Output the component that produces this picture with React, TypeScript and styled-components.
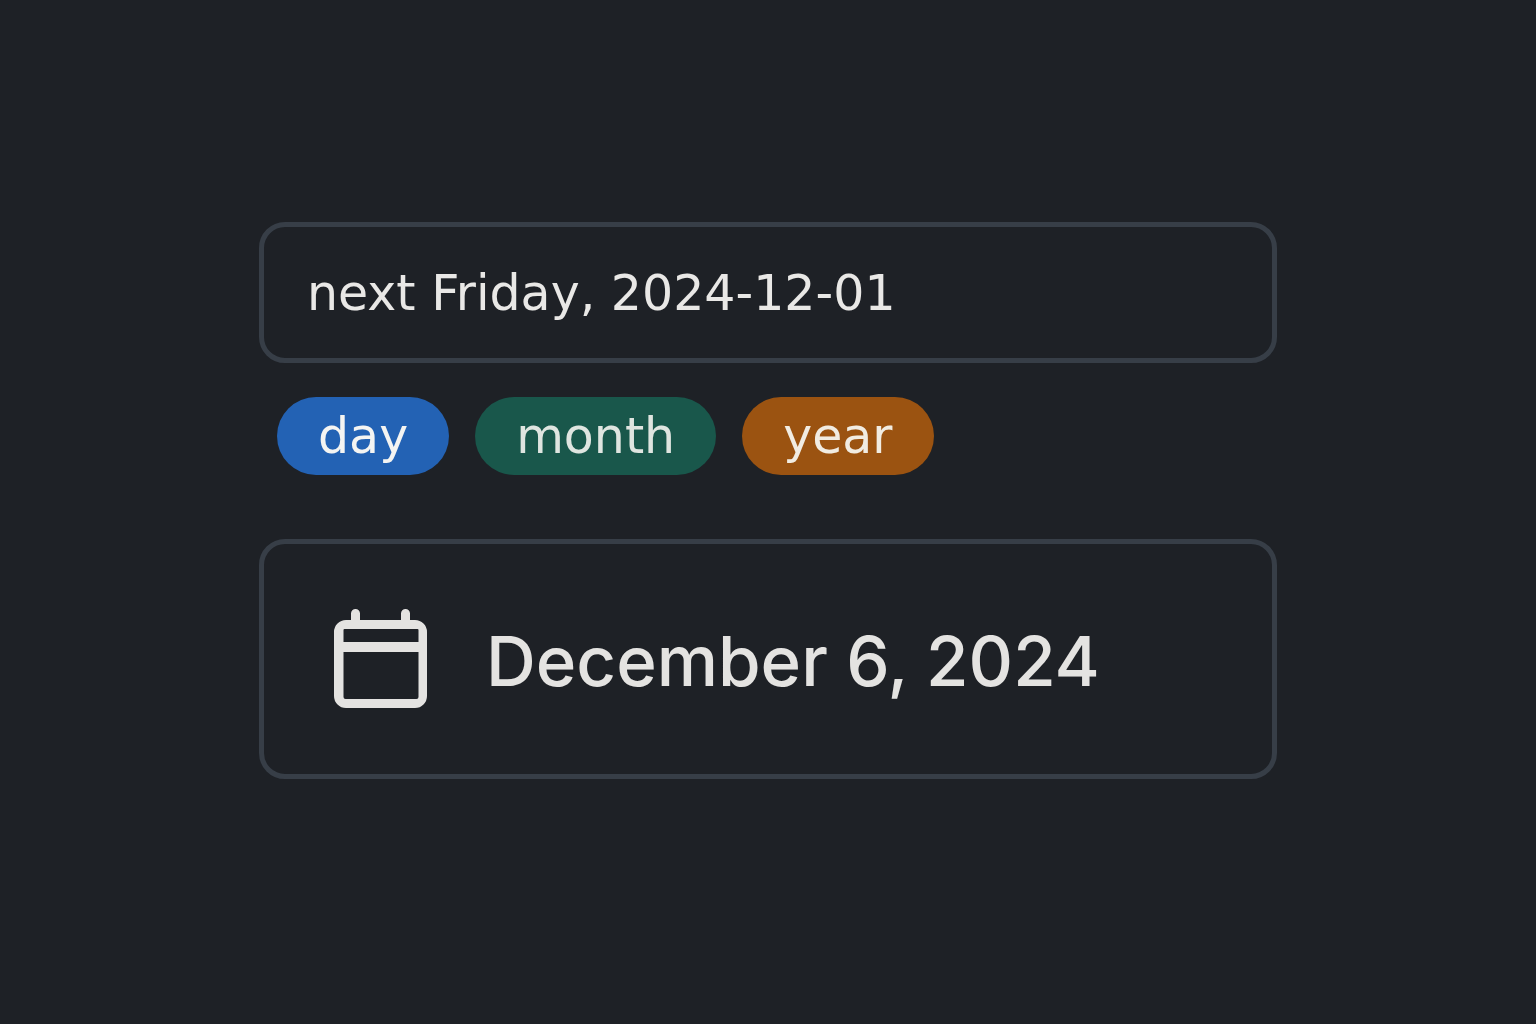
import React, { useState } from 'react';
import styled, { createGlobalStyle } from 'styled-components';

const GlobalStyle = createGlobalStyle`
  *, *::before, *::after {
    box-sizing: border-box;
  }

  body {
    margin: 0;
    background: #1e2126;
    color: #e4e3e1;
    font-family: Inter, "Liberation Sans", sans-serif;
  }
`;

const Page = styled.main`
  display: flex;
  flex-direction: column;
  align-items: center;
  justify-content: center;
  min-height: 100vh;
  padding: 24px 24px 47px;
`;

const Picker = styled.form`
  display: flex;
  flex-direction: column;
  width: 100%;
  max-width: 1018px;
`;

const DateInput = styled.input`
  width: 100%;
  padding: 37px 43px 34px;
  border: 5px solid #373e47;
  border-radius: 26px;
  outline: none;
  background: transparent;
  color: #e9e8e6;
  font-family: "DejaVu Sans", sans-serif;
  font-size: 49px;
  line-height: 60px;
`;

const UnitList = styled.div`
  display: flex;
  flex-wrap: wrap;
  gap: 26px;
  margin: 34px 18px 64px;
`;

const tones = {
  day: { background: '#2362b4', color: '#f4f4f2' },
  month: { background: '#19574b', color: '#dfe5e0' },
  year: { background: '#9b5311', color: '#f1ece2' },
};

type Unit = keyof typeof tones;

const UnitButton = styled.button<{ $unit: Unit }>`
  padding: 10px 41px 8px;
  border: 0;
  border-radius: 39px;
  background: ${({ $unit }) => tones[$unit].background};
  color: ${({ $unit }) => tones[$unit].color};
  font-family: "DejaVu Sans", sans-serif;
  font-size: 49px;
  line-height: 60px;
  cursor: pointer;
`;

const Result = styled.section`
  display: flex;
  align-items: center;
  gap: 58px;
  padding: 65px 70px;
  border: 5px solid #373e47;
  border-radius: 26px;
`;

const CalendarGlyph = styled.svg`
  flex: none;
  width: 94px;
  height: 100px;
`;

const ResultDate = styled.output`
  padding-top: 4px;
  font-size: 69px;
  font-weight: 500;
  line-height: 96px;
`;

function CalendarIcon() {
  return (
    <CalendarGlyph viewBox="0 0 94 100" fill="none" stroke="#e4e3e1" strokeWidth="9" aria-hidden="true">
      <path d="M21.5 14V4.5M71.5 14V4.5" strokeLinecap="round" />
      <path
        fill="#e4e3e1"
        stroke="none"
        fillRule="evenodd"
        d="M12 11h69a12 12 0 0 1 12 12v64a12 12 0 0 1-12 12H12a12 12 0 0 1-12-12V23a12 12 0 0 1 12-12ZM10.5 20a1 1 0 0 0-1 1v12h75V21a1 1 0 0 0-1-1ZM9.500 43v45a2 2 0 0 0 2 2h71a2 2 0 0 0 2-2V43Z"
      />
    </CalendarGlyph>
  );
}

const units: Unit[] = ['day', 'month', 'year'];

export default function App() {
  const [query, setQuery] = useState('next Friday, 2024-12-01');

  return (
    <>
      <GlobalStyle />
      <Page>
        <Picker onSubmit={(event) => event.preventDefault()}>
          <DateInput
            id="date-query"
            type="text"
            aria-label="Date"
            spellCheck={false}
            value={query}
            onChange={(event) => setQuery(event.target.value)}
          />
          <UnitList>
            {units.map((unit) => (
              <UnitButton key={unit} type="button" $unit={unit}>
                {unit}
              </UnitButton>
            ))}
          </UnitList>
          <Result>
            <CalendarIcon />
            <ResultDate htmlFor="date-query">December 6, 2024</ResultDate>
          </Result>
        </Picker>
      </Page>
    </>
  );
}
